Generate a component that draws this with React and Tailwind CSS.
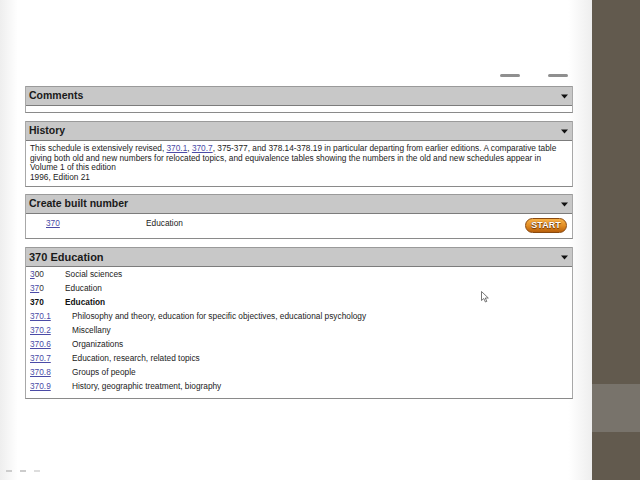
import React from "react";

const Arrow = () => (
  <svg width="7" height="5" viewBox="0 0 7 5" className="mr-[4px]">
    <path d="M0 0.5 H7 L3.5 4.5 Z" fill="#111" />
  </svg>
);

const Header = ({ children, big }) => (
  <div className="flex h-[20px] items-center justify-between border-t border-t-[#9a9a9a] border-b border-b-[#7c7c7c] bg-[#c8c8c8] pl-[3px]">
    <span className={`font-bold text-[#1a1a1a] ${big ? "text-[11px]" : "text-[10.5px]"}`}>{children}</span>
    <Arrow />
  </div>
);

const Panel = ({ title, big, children }) => (
  <div className="border-x border-b border-x-[#a8a8a8] border-b-[#8a8a8a] bg-white">
    <Header big={big}>{title}</Header>
    {children}
  </div>
);

const L = ({ children }) => (
  <span className="text-[#4b4ba6] underline decoration-[#4b4ba6]">{children}</span>
);

const rows = [
  { n: <><L>3</L><span>00</span></>, t: "Social sciences", ind: false },
  { n: <><L>37</L><span>0</span></>, t: "Education", ind: false },
  { n: <span className="font-bold text-[#111]">370</span>, t: <span className="font-bold text-[#111]">Education</span>, ind: false },
  { n: <L>370.1</L>, t: "Philosophy and theory, education for specific objectives, educational psychology", ind: true },
  { n: <L>370.2</L>, t: "Miscellany", ind: true },
  { n: <L>370.6</L>, t: "Organizations", ind: true },
  { n: <L>370.7</L>, t: "Education, research, related topics", ind: true },
  { n: <L>370.8</L>, t: "Groups of people", ind: true },
  { n: <L>370.9</L>, t: "History, geographic treatment, biography", ind: true },
];

export default function App() {
  return (
    <div
      className="flex h-[480px] w-[640px] overflow-hidden"
      style={{ fontFamily: '"Liberation Sans", Arial, sans-serif' }}
    >
      <div className="relative flex-1 bg-[linear-gradient(to_right,#eeeeee,#ffffff_3%,#ffffff_96%,#eeeeee)]">
        <div className="flex h-[86px] items-end justify-end gap-[28px] pb-[9px] pr-[24px]">
          <div className="h-[3px] w-[20px] rounded-full bg-[#8f8f8f]" />
          <div className="h-[3px] w-[20px] rounded-full bg-[#8f8f8f]" />
        </div>
        <div className="ml-[25px] mr-[19px] flex flex-col text-[8.3px] text-[#222]">
          <Panel title="Comments">
            <div className="h-[6px]" />
          </Panel>
          <div className="h-[8px]" />
          <Panel title="History">
            <div className="h-[45px] overflow-hidden px-[4px] pt-[3px] leading-[9.7px]">
              This schedule is extensively revised, <L>370.1</L>, <L>370.7</L>, 375-377, and 378.14-378.19 in particular departing from earlier editions. A comparative table giving both old and new numbers for relocated topics, and equivalence tables showing the numbers in the old and new schedules appear in Volume 1 of this edition
              <br />
              1996, Edition 21
            </div>
          </Panel>
          <div className="h-[7px]" />
          <Panel title="Create built number">
            <div className="flex h-[24px] items-start pt-[3px]">
              <span className="ml-[20px] w-[100px]"><L>370</L></span>
              <span className="flex-1">Education</span>
              <button className="mr-[5px] mt-[1px] flex h-[15px] w-[42px] items-center justify-center rounded-full border border-[#8a4a10] bg-[linear-gradient(to_bottom,#f6b24a,#e08a20_55%,#b8600c)] text-[9px] font-bold text-white [text-shadow:0_0_1px_#6a3000,0_1px_1px_#6a3000]">
                START
              </button>
            </div>
          </Panel>
          <div className="h-[8px]" />
          <Panel title="370 Education" big>
            <div className="flex flex-col pb-[5px]">
              {rows.map((r, i) => (
                <div key={i} className="flex h-[14px] items-center pl-[4px]">
                  <span className={`${r.ind ? "w-[42px]" : "w-[35px]"} text-[#333]`}>{r.n}</span>
                  <span>{r.t}</span>
                </div>
              ))}
            </div>
          </Panel>
        </div>
        <svg className="absolute left-[481px] top-[291px]" width="8" height="12" viewBox="0 0 8 12">
          <path d="M0.5 0.5 L0.5 9.5 L2.8 7.5 L4.4 11 L5.8 10.4 L4.3 7 L7.3 7 Z" fill="#fff" stroke="#555" strokeWidth="0.8" />
        </svg>
        <div className="absolute bottom-[8px] left-[6px] flex gap-[8px]">
          <div className="h-[2px] w-[6px] bg-[#ccc]" />
          <div className="h-[2px] w-[6px] bg-[#ccc]" />
          <div className="h-[2px] w-[6px] bg-[#ddd]" />
        </div>
      </div>
      <div className="flex w-[48px] flex-col bg-[#625a4e]">
        <div className="h-[384px]" />
        <div className="h-[48px] bg-[#78736b]" />
      </div>
    </div>
  );
}
